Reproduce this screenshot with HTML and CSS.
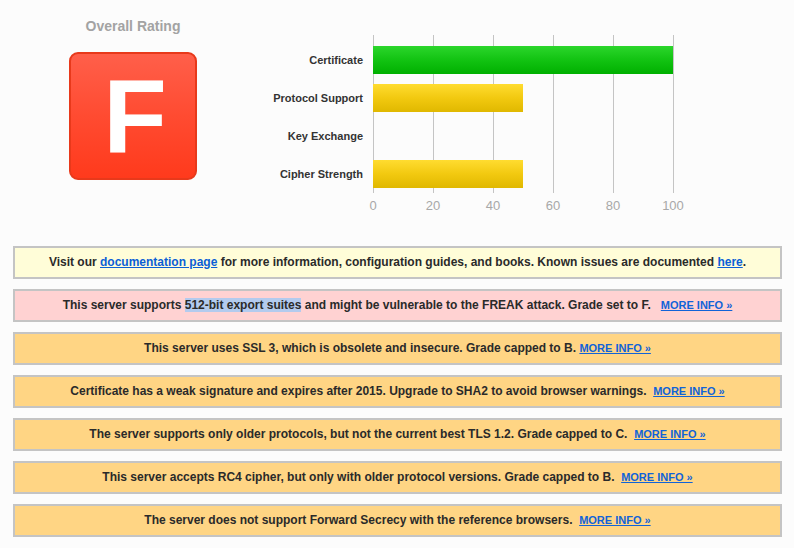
FILE: index.html
```html
<!DOCTYPE html>
<html>
<head>
<meta charset="utf-8">
<link rel="stylesheet" href="styles.css">
</head>
<body>
<div class="top">
  <div class="rating">
    <div class="rating-title">Overall Rating</div>
    <div class="grade">F</div>
  </div>
  <div class="chart">
    <div class="chart-body">
      <div class="labels">
        <div class="label">Certificate</div>
        <div class="label">Protocol Support</div>
        <div class="label">Key Exchange</div>
        <div class="label">Cipher Strength</div>
      </div>
      <div class="plot">
        <div class="bar green" style="width:300px"></div>
        <div class="bar yellow" style="width:150px"></div>
        <div class="bar empty" style="width:0px"></div>
        <div class="bar yellow" style="width:150px"></div>
      </div>
    </div>
    <div class="ticks">
      <span>0</span><span>20</span><span>40</span><span>60</span><span>80</span><span>100</span>
    </div>
  </div>
</div>
<div class="messages">
  <div class="msg info">Visit our <a href="#">documentation page</a> for more information, configuration guides, and books. Known issues are documented <a href="#">here</a>.</div>
  <div class="msg error">This server supports <span class="sel">512-bit export suites</span> and might be vulnerable to the FREAK attack. Grade set to F. &nbsp; <a class="more" href="#">MORE INFO »</a></div>
  <div class="msg warn">This server uses SSL 3, which is obsolete and insecure. Grade capped to B. <a class="more" href="#">MORE INFO »</a></div>
  <div class="msg warn">Certificate has a weak signature and expires after 2015. Upgrade to SHA2 to avoid browser warnings. &nbsp;<a class="more" href="#">MORE INFO »</a></div>
  <div class="msg warn">The server supports only older protocols, but not the current best TLS 1.2. Grade capped to C. &nbsp;<a class="more" href="#">MORE INFO »</a></div>
  <div class="msg warn">This server accepts RC4 cipher, but only with older protocol versions. Grade capped to B. &nbsp;<a class="more" href="#">MORE INFO »</a></div>
  <div class="msg warn">The server does not support Forward Secrecy with the reference browsers. &nbsp;<a class="more" href="#">MORE INFO »</a></div>
</div>
</body>
</html>
```

FILE: styles.css
```css
html, body {
  margin: 0;
  padding: 0;
  background: #fcfcfc;
  font-family: "Liberation Sans", Arial, sans-serif;
}
.top {
  display: flex;
  height: 235px;
}
.rating {
  width: 266px;
  display: flex;
  flex-direction: column;
  align-items: center;
}
.rating-title {
  margin-top: 17px;
  font-size: 14px;
  font-weight: bold;
  color: #a3a3a3;
  line-height: 18px;
}
.grade {
  margin-top: 17px;
  width: 124px;
  height: 124px;
  border: 2px solid #e8391b;
  border-radius: 9px;
  background: linear-gradient(to bottom, #ff5f4a 0%, #ff4b31 50%, #ff3a1c 100%);
  color: #fff;
  font-size: 104px;
  font-weight: bold;
  line-height: 124px;
  text-align: center;
  text-indent: 4px;
}
.chart {
  display: flex;
  flex-direction: column;
}
.chart-body {
  display: flex;
  margin-top: 35px;
}
.labels {
  width: 97px;
  padding-top: 11px;
  display: flex;
  flex-direction: column;
  gap: 10px;
}
.label {
  height: 28px;
  line-height: 28px;
  text-align: right;
  font-size: 11px;
  font-weight: bold;
  color: #333;
}
.plot {
  margin-left: 10px;
  width: 301px;
  height: 142px;
  padding: 11px 0 5px 0;
  display: flex;
  flex-direction: column;
  gap: 10px;
  background-image: repeating-linear-gradient(to right, #c4c4c4 0 1px, transparent 1px 60px);
}
.bar {
  height: 28px;
}
.green {
  background: linear-gradient(to bottom, #2cd62c 0%, #12c312 50%, #00b000 100%);
}
.yellow {
  background: linear-gradient(to bottom, #ffdc30 0%, #f2c910 50%, #e0b800 100%);
}
.ticks {
  display: flex;
  margin-left: 77px;
  margin-top: 5px;
}
.ticks span {
  width: 60px;
  text-align: center;
  font-size: 13px;
  color: #a8a8a8;
  line-height: 16px;
}
.messages {
  display: flex;
  flex-direction: column;
  gap: 10px;
  margin: 11px 12px 0 13px;
}
.msg {
  border: 2px solid #c4c4c4;
  height: 29px;
  line-height: 29px;
  text-align: center;
  font-size: 12px;
  font-weight: bold;
  color: #2a2a2a;
  white-space: nowrap;
}
.info { background: #fffdd8; }
.error { background: #ffd2d2; }
.warn { background: #ffd584; }
.msg a {
  color: #0b5fd6;
  text-decoration: underline;
}
.msg a.more {
  font-size: 11px;
  color: #1163d8;
}
.sel {
  background: #b3cbee;
}
```
